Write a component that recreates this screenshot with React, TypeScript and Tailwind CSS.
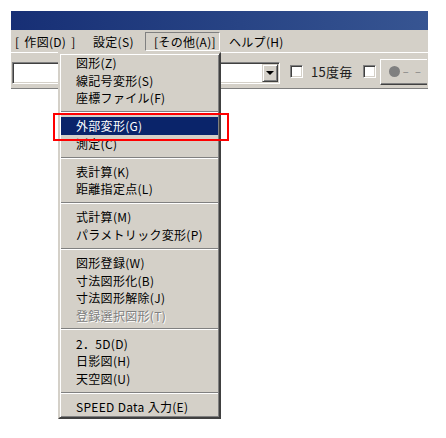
import React from "react";

type Item = { label: string; active?: boolean; disabled?: boolean } | "sep";

const items: Item[] = [
  { label: "図形(Z)" },
  { label: "線記号変形(S)" },
  { label: "座標ファイル(F)" },
  "sep",
  { label: "外部変形(G)", active: true },
  { label: "測定(C)" },
  "sep",
  { label: "表計算(K)" },
  { label: "距離指定点(L)" },
  "sep",
  { label: "式計算(M)" },
  { label: "パラメトリック変形(P)" },
  "sep",
  { label: "図形登録(W)" },
  { label: "寸法図形化(B)" },
  { label: "寸法図形解除(J)" },
  { label: "登録選択図形(T)", disabled: true },
  "sep",
  { label: "2．5D(D)" },
  { label: "日影図(H)" },
  { label: "天空図(U)" },
  "sep",
  { label: "SPEED Data 入力(E)" },
];

function Checkbox() {
  return (
    <div className="w-[13px] h-[13px] bg-white border border-t-[#808080] border-l-[#808080] border-b-white border-r-white shadow-[inset_1px_1px_#404040,inset_-1px_-1px_#d4d0c8]" />
  );
}

export default function App() {
  return (
    <div className="relative w-[446px] h-[438px] bg-white overflow-hidden font-['Noto_Sans_CJK_JP','Noto_Sans',sans-serif] text-[12px] tracking-[0.3px] text-black">
      <div className="pt-[11px] pl-[11px]">
        <div className="w-[417px]">
          {/* title bar */}
          <div className="h-[19px] bg-gradient-to-r from-[#172f75] to-[#375592]" />

          {/* menu bar */}
          <div className="h-[22px] bg-[#d4d0c8] flex items-start pl-[4px] leading-[19px] whitespace-nowrap">
            <div className="w-[78px] mt-[2px] flex">
              <span>[</span>
              <span className="ml-[5px]">作図(D)</span>
              <span className="ml-[5px]">]</span>
            </div>
            <div className="w-[52px] mt-[2px]">設定(S)</div>
            <div className="w-[75px] h-[19px] mt-[2px] pl-[8px] border border-t-[#808080] border-l-[#808080] border-b-white border-r-white leading-[17px]">
              [その他(A)]
            </div>
            <div className="ml-[9px] mt-[2px]">ヘルプ(H)</div>
          </div>

          {/* toolbar */}
          <div className="h-[37px] bg-[#d4d0c8] border-t border-t-white border-b border-b-[#808080] flex items-center pl-[1px]">
            <div className="w-[268px] h-[22px] bg-white border border-t-[#808080] border-l-[#808080] border-b-white border-r-white shadow-[inset_1px_1px_#404040,inset_-1px_-1px_#d4d0c8] flex justify-end items-center pr-[1px] mt-[4px]">
              <div className="w-[16px] h-[18px] bg-[#d4d0c8] border border-t-[#d4d0c8] border-l-[#d4d0c8] border-b-[#404040] border-r-[#404040] shadow-[inset_1px_1px_#fff,inset_-1px_-1px_#808080] flex items-center justify-center">
                <div className="w-0 h-0 border-l-[4px] border-r-[4px] border-t-[4px] border-l-transparent border-r-transparent border-t-black" />
              </div>
            </div>
            <div className="ml-[10px] mt-[2px]">
              <Checkbox />
            </div>
            <div className="ml-[8px] text-[13px] leading-none mt-[1px] text-[#202020]">15度毎</div>
            <div className="ml-[10px] mt-[2px]">
              <Checkbox />
            </div>
            <div className="ml-[4px] w-[47px] h-[26px] mt-[2px] border border-t-white border-l-white border-b-[#404040] border-r-0 shadow-[inset_0_-1px_#808080] flex items-center pl-[8px] gap-[3px] overflow-hidden">
              <div className="w-[11px] h-[11px] rounded-full bg-[#808080] shrink-0" />
              <div className="text-[#808080] whitespace-nowrap text-[11px] tracking-[2px]">– –</div>
            </div>
          </div>
        </div>
      </div>

      {/* dropdown menu */}
      <div className="absolute left-[58px] top-[52px] w-[163px] h-[367px] bg-[#d4d0c8] border-2 border-t-[#d4d0c8] border-l-[#d4d0c8] border-b-[#404040] border-r-[#404040] shadow-[inset_1px_1px_#fff,inset_-1px_-1px_#808080] px-[1px]">
        {items.map((it, i) =>
          it === "sep" ? (
            <div key={i} className="h-[10.4px] flex items-center">
              <div className="w-full h-[2px] border-t border-t-[#808080] border-b border-b-white" />
            </div>
          ) : (
            <div
              key={i}
              className={
                "h-[17.6px] leading-[17.6px] pl-[15px] whitespace-nowrap " +
                (it.active
                  ? "bg-[#0a246a] text-white"
                  : it.disabled
                  ? "text-[#808080] [text-shadow:1px_1px_0_#fff]"
                  : "text-black")
              }
            >
              {it.label}
            </div>
          )
        )}
      </div>

      {/* red highlight box */}
      <div className="absolute left-[53px] top-[113px] w-[176px] h-[28px] border-2 border-[#f00]" />
    </div>
  );
}
